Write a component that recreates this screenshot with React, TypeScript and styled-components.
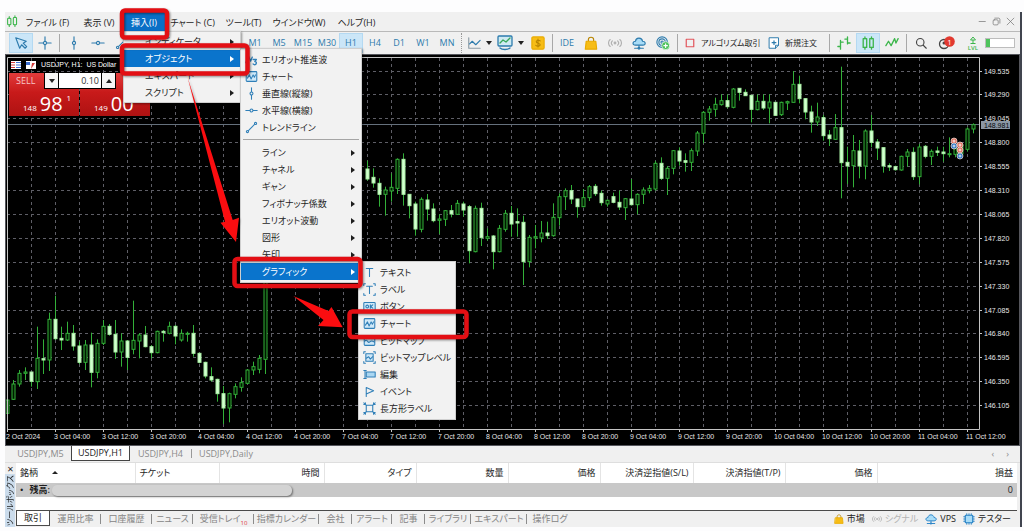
import React from "react";
import styled, { createGlobalStyle, css } from "styled-components";

const GlobalStyle = createGlobalStyle`
  * { box-sizing: border-box; }
  body {
    margin: 0;
    background: #fdfdfe;
    color: #1e1e1e;
    font-family: "Open Sans", "Noto Sans CJK JP", sans-serif;
    font-size: 9px;
    line-height: 14px;
    font-feature-settings: "palt";
  }
  button, input {
    font: inherit;
    font-feature-settings: inherit;
    color: inherit;
    border: 0;
    padding: 0;
    margin: 0;
    background: none;
  }
  ul { list-style: none; margin: 0; padding: 0; }
`;

/* ---------- shell ---------- */

const Page = styled.div`
  position: relative;
  padding: 12px 2px 3px 5px;
`;

const Window = styled.main`
  display: flex;
  flex-direction: column;
  background: #f0f0f0;
  border-right: 2px solid #41454f;
`;

/* ---------- menu bar ---------- */

const MenuBar = styled.nav`
  display: flex;
  align-items: center;
  height: 20px;
  border-bottom: 1px solid #b9b9b9;
`;

const AppIcon = styled.span`
  display: flex;
  justify-content: center;
  width: 15px;
`;

const MenuList = styled.ul`
  display: flex;
  flex: 1;
`;

const MenuEntry = styled.li<{ $width: number }>`
  position: relative;
  width: ${(p) => p.$width}px;
`;

const MenuTitle = styled.button<{ $open?: boolean }>`
  width: 100%;
  height: 19px;
  padding-top: 2px;
  text-align: center;
  white-space: nowrap;
  ${(p) => p.$open && css`background: #0a6fc6; color: #fff;`}
`;

const WindowButtons = styled.div`
  display: flex;
  padding-right: 3px;
  color: #777;
`;

const WindowButton = styled.button`
  display: grid;
  place-items: center;
  width: 14px;
  height: 16px;
`;

/* ---------- drop-down menus ---------- */

const Menu = styled.ul<{ $width: number; $nested?: boolean; $overlap?: number }>`
  position: absolute;
  z-index: 5;
  top: ${(p) => (p.$nested ? "-2px" : "100%")};
  left: ${(p) => (p.$nested ? `calc(100% - ${p.$overlap ?? 0}px)` : "0")};
  width: ${(p) => p.$width}px;
  padding: ${(p) => (p.$nested ? "2px 0" : "1px 0")};
  background: #f2f2f2;
  border: 1px solid #cfcfcf;
  box-shadow: 1px 1px 2px rgba(0, 0, 0, 0.4);
`;

const MenuRow = styled.li`
  position: relative;
`;

const MenuItem = styled.button<{ $active?: boolean }>`
  display: grid;
  grid-template-columns: 21px 1fr 10px;
  align-items: center;
  width: 100%;
  height: 17px;
  text-align: left;
  white-space: nowrap;
  ${(p) => p.$active && css`background: #0a74cc; color: #fff;`}
`;

const MenuIcon = styled.span`
  display: flex;
  padding-left: 4px;
  color: #2f7fb8;
`;

const Caret = styled.span`
  width: 0;
  height: 0;
  border: 3px solid transparent;
  border-left: 4px solid currentColor;
  border-right: 0;
`;

const MenuDivider = styled.li`
  height: 8px;
  padding-top: 3px;
  &::before {
    content: "";
    display: block;
    margin: 0 2px;
    border-top: 1px solid #a5a5a5;
  }
`;

/* ---------- toolbar ---------- */

const Toolbar = styled.div`
  display: flex;
  align-items: center;
  height: 22px;
  padding-left: 4px;
  color: #2d7bad;
`;

const DrawingTools = styled.div`
  display: flex;
  align-items: center;
  flex: 0 0 234px;
  overflow: hidden;
`;

const Tool = styled.button<{ $width?: number; $on?: boolean }>`
  display: flex;
  flex: 0 0 ${(p) => p.$width ?? 24}px;
  align-items: center;
  justify-content: center;
  gap: 5px;
  min-width: 0;
  height: 20px;
  white-space: nowrap;
  ${(p) => p.$on && css`
    background: #cbe6f8;
    box-shadow: inset 0 0 0 1px #b4d9f2;
  `}
`;

const LabelTool = styled(Tool)`
  justify-content: flex-start;
  padding-left: 4px;
  color: #1e1e1e;
  font-size: 8px;
  svg { flex: none; color: #2d7bad; }
`;

const Separator = styled.span`
  flex: 0 0 1px;
  height: 18px;
  margin: 0 2px;
  background: #a8a8a8;
`;

const Grip = styled.span`
  flex: 0 0 1px;
  height: 20px;
  margin: 0 2px;
  border-left: 1px dotted #999;
`;

const DownCaret = styled.span`
  width: 0;
  height: 0;
  border: 3px solid transparent;
  border-top: 4px solid #222;
  border-bottom: 0;
`;

const Battery = styled.span`
  flex: 0 0 30px;
  height: 10px;
  border: 1px solid #bdbdbd;
  background: linear-gradient(to right, #4fc35c 4px, #fff 4px);
`;

/* ---------- chart ---------- */

const ChartFrame = styled.section`
  position: relative;
  background: #000;
  border: 1px solid #55565c;
`;

const ChartSvg = styled.svg`
  display: block;
  width: 100%;
  height: auto;
  font-family: "Liberation Sans", sans-serif;
  font-size: 7px;
`;

const ChartTitle = styled.div`
  position: absolute;
  top: 5px;
  left: 5px;
  display: flex;
  align-items: center;
  gap: 5px;
  height: 10px;
  color: #fff;
  font-family: "Liberation Sans", sans-serif;
  font-size: 7px;
  white-space: pre;
`;

const OneClick = styled.div`
  position: absolute;
  top: 18px;
  left: 3px;
  display: grid;
  grid-template-columns: 70px 70px;
  column-gap: 1px;
  color: #fff;
`;

const TradeSide = styled.button`
  display: flex;
  flex-direction: column;
  justify-content: space-between;
  height: 43px;
  background: linear-gradient(#e23b3b, #c81a1a 45%, #ae1212);
  text-align: left;
`;

const SideName = styled.span`
  padding: 1px 0 0 7px;
  color: #f7c6c6;
`;

const Quote = styled.span`
  display: flex;
  align-items: flex-end;
  gap: 3px;
  height: 27px;
  padding: 0 0 2px 14px;
  font-size: 8px;
  line-height: 12px;
`;

const BigDigits = styled.span`
  font-size: 20px;
  line-height: 20px;
`;

const Pip = styled.span`
  align-self: flex-start;
  padding: 3px 0 0 1px;
`;

const Volume = styled.div`
  position: absolute;
  top: 0;
  left: 35px;
  display: grid;
  grid-template-columns: 13px 42px 13px;
  gap: 1px;
  width: 72px;
  padding: 0 1px 1px;
  background: #000;
`;

const Step = styled.button`
  display: grid;
  place-items: center;
  height: 15px;
  background: #f6f6f6;
  color: #111;
`;

const UpCaret = styled(DownCaret)`
  border-top: 0;
  border-bottom: 4px solid #222;
`;

const VolumeInput = styled.input`
  width: 100%;
  height: 15px;
  padding-right: 2px;
  background: #fff;
  color: #333;
  text-align: right;
`;

/* ---------- chart tabs ---------- */

const ChartTabs = styled.div`
  display: flex;
  height: 17px;
  padding-left: 5px;
  color: #8b8b8b;
  border-bottom: 1px solid #dedede;
`;

const ChartTab = styled.button<{ $active?: boolean; $divided?: boolean }>`
  height: 15px;
  width: 61px;
  white-space: nowrap;
  ${(p) => p.$active && css`
    width: 59px;
    background: #fff;
    color: #222;
    border: 1px solid #444;
    border-top: 0;
  `}
  ${(p) => p.$divided && css`
    background: linear-gradient(#999, #999) 0 50% / 1px 9px no-repeat;
    width: 70px;
  `}
`;

const TabNav = styled.div`
  display: flex;
  gap: 12px;
  margin-left: auto;
  padding-right: 11px;
`;

/* ---------- toolbox ---------- */

const Toolbox = styled.section`
  display: flex;
`;

const Side = styled.div`
  display: flex;
  flex: 0 0 11px;
  flex-direction: column;
`;

const CloseButton = styled.button`
  height: 11px;
  font-size: 11px;
  line-height: 10px;
`;

const SideTitle = styled.div`
  width: 10px;
  height: 53px;
  background: #cbdcec;
  line-height: 10px;
  font-size: 8px;
  text-align: center;
  white-space: nowrap;
  writing-mode: vertical-rl;
  text-orientation: sideways;
  transform: rotate(180deg);
`;

const ToolboxBody = styled.div`
  flex: 1;
  min-width: 0;
  padding-right: 3px;
`;

const TableArea = styled.div`
  height: 47px;
  background: #fff;
`;

const Table = styled.table`
  width: 100%;
  table-layout: fixed;
  border-collapse: collapse;
  th, td { padding: 0 4px; white-space: nowrap; }
`;

const HeadCell = styled.th<{ $width?: number; $left?: boolean }>`
  width: ${(p) => (p.$width ? `${p.$width}px` : "auto")};
  height: 20px;
  font-weight: 400;
  text-align: ${(p) => (p.$left ? "left" : "right")};
  border-right: 1px solid #e4e4e4;
  &:last-child { border-right: 0; }
`;

const SortMark = styled.span`
  display: inline-block;
  margin: 0 0 2px 14px;
  border: 3px solid transparent;
  border-bottom: 3px solid #222;
  border-top: 0;
`;

const BalanceRow = styled.tr`
  background: #c8c8c8;
  height: 14px;
`;

const Balance = styled.div`
  display: flex;
  align-items: center;
  gap: 6px;
  height: 14px;
  font-weight: 600;
`;

const Redaction = styled.span`
  flex: 0 0 240px;
  height: 11px;
  margin-left: -4px;
  border-radius: 5px;
  background: #d3d3d3;
  box-shadow: 1px 1px 2px rgba(0, 0, 0, 0.45);
`;

const BottomBar = styled.div`
  display: flex;
  justify-content: space-between;
  height: 17px;
  border-top: 1px solid #4a4a4a;
`;

const BottomTabs = styled.div`
  display: flex;
  color: #858585;
`;

const BottomTab = styled.button<{ $width: number; $active?: boolean }>`
  width: ${(p) => p.$width}px;
  height: 15px;
  white-space: nowrap;
  background: linear-gradient(#8c8c8c, #8c8c8c) 100% 50% / 1px 10px no-repeat;
  &:last-child { background: none; }
  ${(p) => p.$active && css`
    background: #fff;
    color: #222;
    border: 1px solid #4a4a4a;
    border-top: 0;
  `}
`;

const Count = styled.sub`
  color: #e0323c;
  font-size: 6px;
  line-height: 6px;
`;

const Services = styled.div`
  display: flex;
  gap: 7px;
  padding: 1px 6px 0 0;
`;

const Service = styled.button<{ $muted?: boolean }>`
  display: flex;
  align-items: center;
  gap: 3px;
  height: 14px;
  white-space: nowrap;
  color: ${(p) => (p.$muted ? "#b4b4b4" : "#222")};
  svg { color: #2d86c8; }
`;

const Annotations = styled.svg`
  position: absolute;
  z-index: 10;
  top: 0;
  left: 0;
  pointer-events: none;
  filter: drop-shadow(1px 1px 1px rgba(0, 0, 0, 0.45));
`;

/* ---------- icons ---------- */

const Icon = ({ size = 14, children }: { size?: number; children: React.ReactNode }) => (
  <svg width={size} height={size} viewBox="0 0 16 16" fill="none" stroke="currentColor"
    strokeWidth="1.3" strokeLinecap="round" strokeLinejoin="round" aria-hidden="true">
    {children}
  </svg>
);

const dot = (x: number, y: number, r = 1.8) => (
  <circle cx={x} cy={y} r={r} fill="#f0f0f0" />
);

const icons = {
  app: <g stroke="#3bb54a"><rect x="2" y="4" width="4" height="8" rx="1" /><path d="M4 2v2M4 12v2" /><rect x="9" y="3" width="4" height="9" rx="1" /><path d="M11 1v2M11 12v2" /></g>,
  cursor: <path d="M2 2l4.5 12 2.200-4 4 4 1.800-1.800-4-4L14 6z" />,
  cross: <><path d="M8 1v14M1 8h14" />{dot(8, 8)}</>,
  vline: <><path d="M8 1v14" />{dot(8, 8)}</>,
  hline: <><path d="M1 8h14" />{dot(8, 8)}</>,
  trend: <><path d="M3 13L13 3" />{dot(3, 13, 1.3)}{dot(13, 3, 1.3)}</>,
  channel: <path d="M1 10L12 2M4 14L15 6" />,
  fibo: <path d="M1 3h14M1 8h14M1 13h14" strokeDasharray="2 2" />,
  text: <path d="M4 3h8M8 3v10" />,
  elliott: <><path d="M1 12l3-9 3 7 2-5" strokeWidth="1.600" /><path d="M10 8h4l-2 2.500c3 0 2.500 4-.5 4L10 13.500" strokeWidth="1.600" /></>,
  chart: <><rect x="1.500" y="2" width="13" height="12" rx="1" fill="#cfe8f8" /><path d="M3 10l2.500-4 2 5 2.500-5 1.500 3L13 6" /></>,
  label: <><path d="M4.500 4h7M8 4v9" /><path d="M1 3V1h2M13 1h2v2M15 13v2h-2M3 15H1v-2" /></>,
  ok: <><rect x="1" y="3" width="14" height="10" rx="1" fill="#cfe8f8" /><circle cx="5.200" cy="8" r="1.700" /><path d="M9 6v4M12 6L9.500 8 12 10" /></>,
  bitmap: <><rect x="1.500" y="2" width="13" height="12" rx="1" fill="#cfe8f8" /><path d="M2 9c3-4 4 3 6 1s3-2 6 0" /><circle cx="11" cy="5" r=".8" /></>,
  bitmapLabel: <><rect x="3.500" y="3.500" width="9" height="9" fill="#cfe8f8" /><path d="M4 9l3-2 2 3 3-3M1 3V1h2M13 1h2v2M15 13v2h-2M3 15H1v-2" /></>,
  edit: <><rect x="4" y="5" width="11" height="6" fill="#a9d6f2" /><path d="M1 3h3M1 13h3M2.500 3v10" /></>,
  flag: <path d="M4 14V3l9 4-9 4" />,
  rectLabel: <><rect x="4" y="4" width="8" height="8" /><path d="M1 1l3 3M15 1l-3 3M1 15l3-3M15 15l-3-3M1 3h2V1M13 1v2h2M1 13h2v2M15 13h-2v2" /></>,
  lineChart: <><path d="M2 2v12h13" stroke="#8a9aa5" /><path d="M3 9l3-3 4 4 5-5" /></>,
  indicators: <><rect x="1" y="1" width="14" height="10" rx="1" fill="#cfeaf2" /><path d="M3 8l3-3 3 2 4-4" stroke="#36a85a" /><path d="M3 13c2 2 8 2 10 0" /></>,
  dollar: <><rect x="1" y="1" width="14" height="14" rx="1.500" fill="#f7bd16" stroke="#e9ab00" /><path d="M10.500 5.500C9.500 4.500 6 4.500 6 6.500S10.500 8 10.500 10 7 12 5.500 10.700M8 3.500v9" stroke="#b98500" /></>,
  bag: <><path d="M5 6V4c0-3.500 6-3.500 6 0v2" stroke="#b98500" /><path d="M2.500 6h11l1 9h-13z" fill="#f7bd16" stroke="#e9ab00" /></>,
  signal: <g stroke="#b0b0b0"><circle cx="8" cy="8" r="1" /><path d="M5 5.500c-1.500 1.500-1.500 3.500 0 5M11 5.500c1.500 1.500 1.500 3.500 0 5M2.500 4c-2.500 2-2.500 6 0 8M13.500 4c2.500 2 2.500 6 0 8" /></g>,
  cloud: <><path d="M4 10.500C0 10.500.5 6 4 6c.5-5 7.500-4.500 8 0 4 0 4 4.500.5 4.500z" fill="#a8dcf7" /><path d="M8 11v3M3 14h10" /><circle cx="8" cy="14" r="1" /></>,
  ripple: <><circle cx="7" cy="7" r="6" /><circle cx="7" cy="7" r="3.700" /><circle cx="7" cy="7" r="1.300" /><circle cx="11" cy="11" r="4.500" fill="#4fc35c" stroke="#e8f7ea" strokeWidth=".8" /><path d="M11 9v4M9 11h4" stroke="#fff" /></>,
  stop: <rect x="3" y="3" width="10" height="10" stroke="#e2555c" strokeWidth="1.600" />,
  order: <><path d="M2 1h12v10l-4 4H2zM14 11h-4v4" fill="#fff" /><path d="M8 5v5M5.500 7.500h5" strokeWidth="1.600" /></>,
  bars: <g stroke="#3bb54a" strokeWidth="1.500"><path d="M4 5v10M1 12h3M4 7h3M12 1v8M9 3.500h3M12 8h3" /></g>,
  candles: <g stroke="#3bb54a" strokeWidth="1.500"><rect x="2.500" y="3" width="4" height="10" /><rect x="10" y="3" width="4" height="10" /><path d="M4.500 1v2M4.500 13v2M12 1v2M12 13v2" /></g>,
  zigzag: <path d="M1 11l3-5 3 5 4-8 1.500 5L15 3" stroke="#3bb54a" strokeWidth="1.500" />,
  search: <g stroke="#444" strokeWidth="1.500"><circle cx="7" cy="7" r="5" /><path d="M11 11l4 4" /></g>,
  chip: <><rect x="3" y="3" width="10" height="10" rx="1" fill="#a8dcf7" strokeWidth="1.600" /><path d="M5 1v2M8 1v2M11 1v2M5 13v2M8 13v2M11 13v2M1 5h2M1 8h2M1 11h2M13 5h2M13 8h2M13 11h2" /></>,
};

/* ---------- data ---------- */

type Bar = [top: number, bottom: number, high: number, low: number, down: 0 | 1];

// Each run holds consecutive hourly bars. Levels are counted downwards in
// thirds of a unit from the run's base line.
const runs: { start: number; base: number; bars: Bar[] }[] = [
  { start: 0, base: 290, bars: [
    [330,370,328,370,0],[282,328,270,330,0],[250,282,240,290,0],[246,250,232,270,0],[246,274,246,290,1],
    [205,275,110,297,0],[206,210,148,252,1],[88,210,68,243,0],[88,146,17,150,1],[145,150,110,180,1],
    [130,150,95,153,0],[130,168,105,182,1],[168,217,155,222,1],[165,217,150,240,0],[165,247,128,292,1],
    [160,247,148,265,0],[109,160,90,165,0],[109,133,102,137,1],[133,186,90,207,1],[153,186,130,230,0],
    [153,202,150,240,1],[151,178,32,193,0],[135,153,130,205,0],[135,170,108,172,1],[170,188,165,205,1],
    [124,188,122,190,0],[124,128,120,155,1],[109,130,95,133,0],[109,138,105,163,1],[130,150,118,155,0],
    [130,133,125,155,0],[130,190,105,200,1],[190,217,188,220,1],[217,258,215,265,1],[260,270,232,275,1],
    [268,311,266,335,1],[311,354,288,402,1],[311,354,308,397,0],[290,313,280,325,0],[278,292,262,305,0],
    [240,280,237,282,0],[230,240,215,255,0],[205,238,195,250,0],[-60,208,-100,252,0],
  ] },
  { start: 60, base: 120, bars: [
    [147,177,122,182,1],[172,189,145,203,1],[190,223,175,260,1],[210,223,200,287,0],[202,213,160,245,0],
    [118,205,115,222,0],[118,223,100,257,1],[223,257,222,295,1],[252,327,245,347,1],[238,328,232,337,0],
    [240,267,222,302,1],[267,302,250,307,1],[297,301,283,342,0],[272,298,270,318,0],[272,282,255,292,1],
    [250,283,240,285,0],[252,270,245,290,1],[260,392,255,430,1],[265,395,257,397,0],[265,353,248,378,1],
    [350,355,325,362,0],[348,395,345,448,1],[325,395,315,397,0],[280,328,270,335,0],[280,312,258,350,1],
    [305,309,265,350,1],[307,425,287,495,1],[352,425,345,442,0],[350,354,315,385,0],[339,354,303,367,0],
    [339,347,305,357,1],[292,347,250,350,0],[230,293,220,317,0],[212,230,205,270,0],[212,237,195,252,1],
    [237,260,236,293,1],[233,260,207,262,0],[200,233,195,243,0],[199,221,192,228,1],[220,248,212,257,1],
  ] },
  { start: 100, base: 60, bars: [
    [421,432,418,440,0],[410,427,398,430,1],[427,441,392,450,1],[416,443,414,480,0],[417,434,357,437,1],
    [403,434,400,463,0],[390,403,382,432,0],[385,392,375,400,0],[310,387,303,392,0],[310,355,292,360,1],
    [325,355,318,405,0],[272,325,270,343,0],[273,303,262,317,1],[302,307,280,335,1],[272,307,265,333,0],
    [219,273,213,288,0],[157,220,153,250,0],[147,157,138,182,0],[133,148,113,170,0],[122,134,103,137,0],
    [122,140,103,145,1],[87,142,84,145,0],[85,97,84,122,1],[97,107,88,108,1],[106,148,105,187,1],
    [124,149,103,151,0],[124,144,103,150,1],[126,144,103,190,0],[127,166,126,168,1],[127,164,125,168,0],
    [125,129,122,150,0],[73,127,33,127,0],[73,116,47,130,1],[116,156,115,178,1],[156,186,137,218,1],
    [171,186,128,198,0],
  ] },
  { start: 136, base: 50, bars: [
    [203,257,195,272,1],[255,266,240,288,1],[233,268,192,270,0],[233,338,50,445,1],[337,348,290,402,1],
    [302,347,255,412,0],[303,348,270,385,1],[243,348,238,388,0],[243,277,195,292,1],[276,294,267,330,1],
    [293,348,292,368,1],[347,351,340,363,1],[350,359,347,362,1],[319,360,317,362,0],[306,319,297,350,0],
    [307,380,292,390,1],[291,380,282,403,0],[289,319,285,325,1],[304,319,298,345,0],[303,307,290,318,1],
    [306,311,290,335,1],[311,314,262,322,0],[296,313,290,322,0],[285,312,280,315,0],[237,298,232,305,0],
    [224,237,220,250,0],
  ] },
];

const prices = ["149.535", "149.290", "149.045", "148.800", "148.555", "148.310", "148.065", "147.820",
  "147.575", "147.330", "147.085", "146.840", "146.595", "146.350", "146.105"];

const times = ["2 Oct 2024",
  ...[3, 4, 7, 8, 9, 10].flatMap((d) => [`${d} Oct 04:00`, `${d} Oct 12:00`, `${d} Oct 20:00`]),
  "11 Oct 04:00", "11 Oct 12:00"];

const priceY = (i: number) => Math.round(70.5 + 23.9 * i) + 0.5;

const markers: [number, number, string][] = [
  [954, 141, "#e0705c"], [954, 146, "#2f78c4"], [960, 145, "#e0705c"], [960, 150, "#e0705c"], [960, 156, "#2f78c4"],
];

const CandleChart = () => (
  <ChartSvg viewBox="6 55 1013 390" role="img" aria-label="USDJPY H1">
    <g stroke="#5e5e66" strokeWidth="1" strokeDasharray="3 3">
      {prices.map((p, i) => <path key={p} d={`M7 ${priceY(i)}H979`} />)}
      {Array.from({ length: 40 }, (_, i) => <path key={i} d={`M${31.5 + 24 * i} 58V429`} />)}
    </g>
    <path d="M7 124.500H979" stroke="#65707c" />
    <g stroke="#32b038" strokeWidth="1">
      {runs.flatMap(({ start, base, bars }) =>
        bars.map(([top, bottom, high, low, down], i) => {
          const x = 7.5 + 6 * (start + i);
          const y = (v: number) => base + v / 3;
          return (
            <g key={start + i}>
              <path d={`M${x} ${y(high)}V${y(low)}`} />
              <rect x={x - 1.5} y={y(top)} width="3" height={Math.max(1, y(bottom) - y(top))}
                fill={down ? "#d3ffd0" : "#001a00"} stroke={down ? "#a9f0a5" : "#32b038"} />
            </g>
          );
        }),
      )}
    </g>
    {markers.map(([x, y, fill]) => (
      <g key={`${x}-${y}`}>
        <circle cx={x} cy={y} r="3" fill={fill} stroke="#f3e3df" strokeWidth=".7" />
        <path d={`M${x - 1.5} ${y}h3M${x} ${y - 1.5}v3`} stroke="#fff" strokeWidth=".8" />
      </g>
    ))}
    <path d="M7.500 429.500V57.500H979.500V429.500Z" fill="none" stroke="#c4c4c4" />
    <g stroke="#c4c4c4">
      {prices.map((p, i) => <path key={p} d={`M979 ${priceY(i)}h3`} />)}
      {times.map((t, i) => <path key={t} d={`M${7.5 + 48 * i} 429v3`} />)}
    </g>
    <g fill="#e6e6e6">
      {prices.map((p, i) => <text key={p} x="984" y={priceY(i) + 2.5}>{p}</text>)}
      {times.map((t, i) => <text key={t} x={6 + 48 * i} y="438.500">{t}</text>)}
    </g>
    <rect x="981" y="121" width="29" height="8" fill="#8b97a4" />
    <text x="984" y="127.500" fill="#05080c">148.981</text>
  </ChartSvg>
);

/* ---------- menus ---------- */

type Item = { label: string; icon?: React.ReactNode; more?: boolean; active?: boolean; sub?: React.ReactNode };

const MenuItems = ({ items }: { items: Item[] }) => (
  <>
    {items.map((it) => (
      <MenuRow key={it.label}>
        <MenuItem type="button" $active={it.active}>
          <MenuIcon>{it.icon && <Icon size={13}>{it.icon}</Icon>}</MenuIcon>
          {it.label}
          {it.more && <Caret />}
        </MenuItem>
        {it.sub}
      </MenuRow>
    ))}
  </>
);

const graphicMenu = (
  <Menu $width={98} $nested $overlap={3}>
    <MenuItems items={[
      { label: "テキスト", icon: icons.text },
      { label: "ラベル", icon: icons.label },
      { label: "ボタン", icon: icons.ok },
      { label: "チャート", icon: icons.chart },
      { label: "ビットマップ", icon: icons.bitmap },
      { label: "ビットマップレベル", icon: icons.bitmapLabel },
      { label: "編集", icon: icons.edit },
      { label: "イベント", icon: icons.flag },
      { label: "長方形ラベル", icon: icons.rectLabel },
    ]} />
  </Menu>
);

const objectMenu = (
  <Menu $width={122} $nested>
    <MenuItems items={[
      { label: "エリオット推進波", icon: icons.elliott },
      { label: "チャート", icon: icons.chart },
      { label: "垂直線(縦線)", icon: icons.vline },
      { label: "水平線(横線)", icon: icons.hline },
      { label: "トレンドライン", icon: icons.trend },
    ]} />
    <MenuDivider />
    <MenuItems items={[
      { label: "ライン", more: true },
      { label: "チャネル", more: true },
      { label: "ギャン", more: true },
      { label: "フィボナッチ係数", more: true },
      { label: "エリオット波動", more: true },
      { label: "図形", more: true },
      { label: "矢印", more: true },
      { label: "グラフィック", more: true, active: true, sub: graphicMenu },
    ]} />
  </Menu>
);

const insertMenu = (
  <Menu $width={118}>
    <MenuItems items={[
      { label: "インディケータ", more: true },
      { label: "オブジェクト", more: true, active: true, sub: objectMenu },
      { label: "エキスパート", more: true },
      { label: "スクリプト", more: true },
    ]} />
  </Menu>
);

const menus: [string, number][] = [
  ["ファイル (F)", 55], ["表示 (V)", 48], ["挿入(I)", 42], ["チャート (C)", 55], ["ツール(T)", 47],
  ["ウインドウ(W)", 64], ["ヘルプ(H)", 51],
];

const bottomTabs: [string, number][] = [
  ["取引", 34], ["運用比率", 51], ["口座履歴", 51], ["ニュース", 41], ["受信トレイ", 61], ["指標カレンダー", 65],
  ["会社", 33], ["アラート", 40], ["記事", 33], ["ライブラリ", 46], ["エキスパート", 56], ["操作ログ", 46],
];

const columns: [string, number?][] = [
  ["タイプ", 92], ["数量", 92], ["価格", 92], ["決済逆指値(S/L)", 93], ["決済指値(T/P)", 92], ["価格", 92], ["損益"],
];

const drawing: [string, React.ReactNode][] = [
  ["vertical", icons.vline], ["horizontal", icons.hline], ["trend", icons.trend],
  ["channel", icons.channel], ["fibonacci", icons.fibo], ["text", icons.text],
];

export default function App() {
  return (
    <Page lang="ja">
      <GlobalStyle />
      <Window>
        <MenuBar>
          <AppIcon><Icon size={13}>{icons.app}</Icon></AppIcon>
          <MenuList>
            {menus.map(([label, width]) => (
              <MenuEntry key={label} $width={width}>
                <MenuTitle type="button" $open={label === "挿入(I)"}>{label}</MenuTitle>
                {label === "挿入(I)" && insertMenu}
              </MenuEntry>
            ))}
          </MenuList>
          <WindowButtons>
            <WindowButton type="button" aria-label="minimize"><Icon size={9}><path d="M2 8h11" /></Icon></WindowButton>
            <WindowButton type="button" aria-label="restore"><Icon size={9}><rect x="2" y="5" width="9" height="9" rx="2" /><path d="M5 2h7c1 0 2 1 2 2v7" /></Icon></WindowButton>
            <WindowButton type="button" aria-label="close"><Icon size={9}><path d="M2 2l12 12M14 2L2 14" /></Icon></WindowButton>
          </WindowButtons>
        </MenuBar>

        <Toolbar>
          <DrawingTools>
            <Tool type="button" $on aria-label="cursor"><Icon>{icons.cursor}</Icon></Tool>
            <Tool type="button" aria-label="crosshair"><Icon>{icons.cross}</Icon></Tool>
            <Separator />
            {drawing.map(([name, icon]) => (
              <Tool key={name} type="button" aria-label={name}><Icon>{icon}</Icon></Tool>
            ))}
          </DrawingTools>
          {["M1", "M5", "M15", "M30", "H1", "H4", "D1", "W1", "MN"].map((tf) => (
            <Tool key={tf} type="button" $on={tf === "H1"}>{tf}</Tool>
          ))}
          <Grip />
          <Tool type="button" $width={31} aria-label="chart type"><Icon>{icons.lineChart}</Icon><DownCaret /></Tool>
          <Tool type="button" $width={31} aria-label="indicators"><Icon size={16}>{icons.indicators}</Icon><DownCaret /></Tool>
          <Tool type="button" aria-label="quotes"><Icon>{icons.dollar}</Icon></Tool>
          <Separator />
          <Tool type="button">IDE</Tool>
          <Tool type="button" aria-label="market"><Icon>{icons.bag}</Icon></Tool>
          <Tool type="button" aria-label="signals"><Icon>{icons.signal}</Icon></Tool>
          <Tool type="button" aria-label="vps"><Icon>{icons.cloud}</Icon></Tool>
          <Tool type="button" aria-label="copy trading"><Icon>{icons.ripple}</Icon></Tool>
          <Separator />
          <LabelTool type="button" $width={84}><Icon size={12}>{icons.stop}</Icon>アルゴリズム取引</LabelTool>
          <LabelTool type="button" $width={63}><Icon size={12}>{icons.order}</Icon>新規注文</LabelTool>
          <Separator />
          <Tool type="button" aria-label="bars"><Icon>{icons.bars}</Icon></Tool>
          <Tool type="button" $on aria-label="candles"><Icon>{icons.candles}</Icon></Tool>
          <Tool type="button" aria-label="line"><Icon>{icons.zigzag}</Icon></Tool>
          <Separator />
          <Tool type="button" aria-label="search"><Icon size={12}>{icons.search}</Icon></Tool>
          <Tool type="button" $width={28} aria-label="notifications">
            <svg width="18" height="14" viewBox="0 0 18 14" aria-hidden="true">
              <circle cx="6" cy="8" r="4.500" fill="none" stroke="#444" strokeWidth="1.300" />
              <circle cx="6" cy="7" r="1.500" fill="#444" />
              <circle cx="11.500" cy="5.500" r="5.300" fill="#e23a30" />
              <text x="11.500" y="8.500" textAnchor="middle" fontSize="8" fill="#fff">1</text>
            </svg>
          </Tool>
          <Tool type="button" aria-label="level">
            <svg width="14" height="16" viewBox="0 0 14 16" aria-hidden="true">
              <path d="M7 8V5M4.500 5L7 2l2.500 3zM4.500 8.500h5" fill="none" stroke="#3bb54a" />
              <text x="7" y="15" textAnchor="middle" fontSize="6" fontWeight="600" fill="#3bb54a">LVL</text>
            </svg>
          </Tool>
          <Battery />
        </Toolbar>

        <ChartFrame>
          <CandleChart />
          <ChartTitle>
            <svg width="10" height="8" viewBox="0 0 10 8" aria-hidden="true">
              <rect width="10" height="8" fill="#fff" />
              <path d="M0 1.500h4M0 4h4M0 6.500h4" stroke="#d23c3c" />
              <path d="M5 1.500h5M5 4h5M5 6.500h5" stroke="#3c6fd2" />
            </svg>
            <svg width="10" height="8" viewBox="0 0 10 8" aria-hidden="true">
              <rect width="10" height="8" fill="#fff" />
              <path d="M0 1h4v3H0z" fill="#3c6fd2" /><path d="M6 2h3L5 8z" fill="#d23c3c" />
            </svg>
            {"USDJPY, H1:  US Dollar"}
          </ChartTitle>
          <OneClick>
            <TradeSide type="button">
              <SideName>SELL</SideName>
              <Quote>148<BigDigits>98</BigDigits><Pip>1</Pip></Quote>
            </TradeSide>
            <TradeSide type="button">
              <SideName />
              <Quote>149<BigDigits>00</BigDigits></Quote>
            </TradeSide>
            <Volume>
              <Step type="button" aria-label="decrease"><DownCaret /></Step>
              <VolumeInput aria-label="volume" defaultValue="0.10" />
              <Step type="button" aria-label="increase"><UpCaret /></Step>
            </Volume>
          </OneClick>
        </ChartFrame>

        <ChartTabs>
          <ChartTab type="button">USDJPY,M5</ChartTab>
          <ChartTab type="button" $active>USDJPY,H1</ChartTab>
          <ChartTab type="button">USDJPY,H4</ChartTab>
          <ChartTab type="button" $divided>USDJPY,Daily</ChartTab>
          <TabNav>
            <button type="button">‹</button>
            <button type="button">›</button>
          </TabNav>
        </ChartTabs>

        <Toolbox>
          <Side>
            <CloseButton type="button">×</CloseButton>
            <SideTitle>ツールボックス</SideTitle>
          </Side>
          <ToolboxBody>
            <TableArea>
              <Table>
                <thead>
                  <tr>
                    <HeadCell $width={119} $left>銘柄<SortMark /></HeadCell>
                    <HeadCell $width={84} $left>チケット</HeadCell>
                    <HeadCell $width={105}>時間</HeadCell>
                    {columns.map(([name, width], i) => <HeadCell key={i} $width={width}>{name}</HeadCell>)}
                  </tr>
                </thead>
                <tbody>
                  <BalanceRow>
                    <td colSpan={9}><Balance><span>•</span>残高:<Redaction /></Balance></td>
                    <td align="right">0</td>
                  </BalanceRow>
                </tbody>
              </Table>
            </TableArea>
            <BottomBar>
              <BottomTabs>
                {bottomTabs.map(([name, width]) => (
                  <BottomTab key={name} type="button" $width={width} $active={name === "取引"}>
                    {name}{name === "受信トレイ" && <Count>10</Count>}
                  </BottomTab>
                ))}
              </BottomTabs>
              <Services>
                <Service type="button"><Icon size={10}>{icons.bag}</Icon>市場</Service>
                <Service type="button" $muted><Icon size={10}>{icons.signal}</Icon>シグナル</Service>
                <Service type="button"><Icon size={12}>{icons.cloud}</Icon>VPS</Service>
                <Service type="button"><Icon size={12}>{icons.chip}</Icon>テスター</Service>
              </Services>
            </BottomBar>
          </ToolboxBody>
        </Toolbox>
      </Window>

      <Annotations width="480" height="350" viewBox="0 0 480 350" aria-hidden="true">
        <g fill="none" stroke="#e30f14" strokeWidth="4.500">
          <rect x="122" y="10.500" width="45" height="27" rx="3" />
          <rect x="122" y="45.500" width="125.500" height="28" rx="3" />
          <rect x="234.500" y="259" width="126" height="27" rx="3" />
          <rect x="349.500" y="311.500" width="117" height="25.500" rx="3" />
        </g>
        <g fill="#fb0d10">
          <path d="M187.500 77L232.700 220L239 217.700L236 242L220.500 222.700L225 221.700Z" />
          <path d="M293.300 296L328.500 311L331.500 307L342.700 327.300L318 326L323.500 320Z" />
        </g>
      </Annotations>
    </Page>
  );
}
